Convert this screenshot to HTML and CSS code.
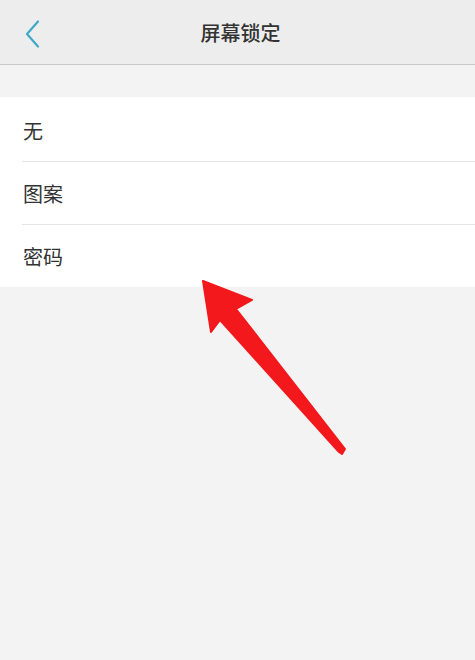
FILE: index.html
```html
<!DOCTYPE html>
<html lang="zh-CN">
<head>
  <meta charset="UTF-8" />
  <meta name="viewport" content="width=device-width, initial-scale=1.0">
  <title>屏幕锁定</title>
  <link rel="stylesheet" href="styles.css">
</head>
<body>
  <!-- Title bar -->
  <div class="header">
    <button class="back-button" aria-label="返回">
      <svg width="18" height="28" viewBox="0 0 18 28" fill="none" xmlns="http://www.w3.org/2000/svg">
        <path d="M14 1.5L3 14L14 26.5" stroke="#3fa9c9" stroke-width="2.2" stroke-linecap="round" stroke-linejoin="round"/>
      </svg>
    </button>
    <h1>屏幕锁定</h1>
  </div>

  <!-- Lock type options -->
  <div class="option-list">
    <div class="option-item">无</div>
    <div class="option-item">图案</div>
    <div class="option-item">密码</div>
  </div>

  <!-- Annotation arrow pointing at 密码 -->
  <svg class="annotation-arrow" width="475" height="660" viewBox="0 0 475 660" xmlns="http://www.w3.org/2000/svg">
    <polygon points="203,281 252,300 236,309 345,449 342,454 339,452 220,320 211,332"
      fill="#f2181c" stroke="#f2181c" stroke-width="2" stroke-linejoin="round"/>
  </svg>
</body>
</html>
```

FILE: styles.css
```css
* {
  margin: 0;
  padding: 0;
  box-sizing: border-box;
  font-family: 'Noto Sans CJK SC', 'Noto Sans', sans-serif;
}
body {
  background-color: #f3f3f3;
  width: 475px;
  height: 660px;
  overflow: hidden;
  position: relative;
}
/* Title bar */
.header {
  height: 65px;
  background-color: #ededed;
  border-bottom: 1px solid #c9c9c9;
  display: flex;
  align-items: center;
  justify-content: center;
  position: relative;
}
.header h1 {
  font-size: 20px;
  font-weight: 500;
  color: #333;
  margin-left: 6px;
}
.back-button {
  position: absolute;
  left: 24px;
  top: 20px;
  background: none;
  border: none;
  display: flex;
}
/* Options */
.option-list {
  margin-top: 32px;
  background-color: #fff;
}
.option-item {
  height: 63px;
  margin-left: 22px;
  padding-left: 1px;
  display: flex;
  align-items: center;
  font-size: 20px;
  color: #333;
  border-bottom: 1px solid #e4e4e4;
}
.option-item:first-child {
  height: 65px;
  padding-top: 2px;
}
.option-item:last-child {
  border-bottom: none;
  height: 62px;
}
.annotation-arrow {
  position: absolute;
  left: 0;
  top: 0;
  pointer-events: none;
}
```
